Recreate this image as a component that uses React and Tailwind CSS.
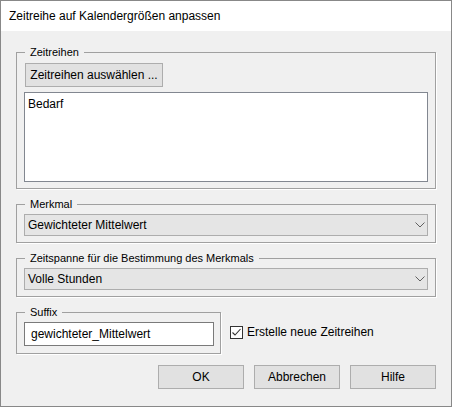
import React from "react";

function Group({ label, className = "", children }) {
  return (
    <fieldset className={`border border-[#a0a0a0] shadow-[1px_1px_0_#fff] ${className}`}>
      <legend className="ml-[8px] px-[5px] text-[11px] leading-[16px]">{label}</legend>
      {children}
    </fieldset>
  );
}

function Chevron() {
  return (
    <svg width="10" height="6" viewBox="0 0 10 6" className="shrink-0">
      <path d="M0.5 0.5 L5 5 L9.5 0.5" fill="none" stroke="#606060" strokeWidth="1" />
    </svg>
  );
}

function Combo({ value }) {
  return (
    <div className="ml-[7px] mt-[2px] mb-[6px] flex h-[22px] w-[404px] items-center justify-between border border-[#adadad] bg-[#e5e5e5] pl-[3px] pr-[2px]">
      <span>{value}</span>
      <Chevron />
    </div>
  );
}

function Btn({ children, className = "" }) {
  return (
    <div className={`flex h-[24px] w-[86px] items-center justify-center border border-[#adadad] bg-[#e1e1e1] ${className}`}>
      {children}
    </div>
  );
}

export default function App() {
  return (
    <div className="flex h-[407px] w-[452px] flex-col border border-[#888888] bg-[#f0f0f0] font-['Segoe_UI','Liberation_Sans',sans-serif] text-[12px] leading-[16px] text-black">
      <div className="flex h-[30px] shrink-0 items-center bg-white pl-[8px]">
        Zeitreihe auf Kalendergrößen anpassen
      </div>
      <div className="flex flex-col px-[15px] pt-[13px]">
        <Group label="Zeitreihen">
          <div className="ml-[8px] mt-[3px] flex h-[24px] w-[138px] items-center justify-center border border-[#adadad] bg-[#e1e1e1]">
            Zeitreihen auswählen ...
          </div>
          <div className="ml-[7px] mt-[5px] mb-[6px] h-[90px] w-[404px] border border-[#828790] bg-white pl-[3px] pt-[3px]">
            Bedarf
          </div>
        </Group>
        <Group label="Merkmal" className="mt-[7px]">
          <Combo value="Gewichteter Mittelwert" />
        </Group>
        <Group label="Zeitspanne für die Bestimmung des Merkmals" className="mt-[7px]">
          <Combo value="Volle Stunden" />
        </Group>
        <div className="mt-[7px] flex items-start">
          <Group label="Suffix" className="w-[205px]">
            <div className="ml-[7px] mt-[2px] mb-[7px] flex h-[24px] w-[190px] items-center border border-[#7a7a7a] bg-white pl-[6px]">
              gewichteter_Mittelwert
            </div>
          </Group>
          <div className="ml-[9px] mt-[20px] flex items-center">
            <div className="flex h-[13px] w-[13px] items-center justify-center border border-[#333333] bg-white">
              <svg width="11" height="11" viewBox="0 0 11 11">
                <path d="M1.5 5.5 L4 8 L9.5 2" fill="none" stroke="#333333" strokeWidth="1.1" />
              </svg>
            </div>
            <span className="ml-[4px]">Erstelle neue Zeitreihen</span>
          </div>
        </div>
        <div className="mt-[11px] flex justify-end gap-[10px]">
          <Btn>OK</Btn>
          <Btn>Abbrechen</Btn>
          <Btn>Hilfe</Btn>
        </div>
      </div>
    </div>
  );
}
